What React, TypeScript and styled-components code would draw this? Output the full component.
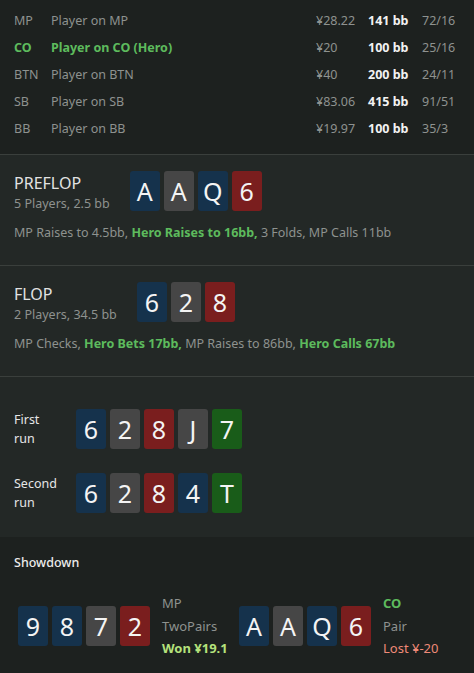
import React from 'react';
import styled, { createGlobalStyle } from 'styled-components';

const GlobalStyle = createGlobalStyle`
  body {
    margin: 0;
    background: #1d211f;
    font-family: 'Noto Sans', 'Open Sans', sans-serif;
    color: #8e928f;
  }
`;

type Suit = 's' | 'c' | 'h' | 'd';

const suitColors: Record<Suit, string> = {
  s: '#15324c',
  c: '#464646',
  h: '#7a1e1e',
  d: '#195c19',
};

const Page = styled.div`
  width: 474px;
  min-height: 673px;
  background: #1d211f;
`;

const PlayerTable = styled.div`
  padding: 7px 14px 12px;
  border-bottom: 1px solid #3a3f3c;
`;

const PlayerRow = styled.div<{ $hero?: boolean }>`
  display: grid;
  grid-template-columns: 37px 1fr 52px 54px 38px;
  height: 27px;
  align-items: center;
  font-size: 12.5px;
  color: ${({ $hero }) => ($hero ? '#5dbb5d' : '#8e928f')};
  font-weight: ${({ $hero }) => ($hero ? 700 : 400)};
`;

const Stack = styled.span`
  color: #8e928f;
  font-weight: 400;
`;

const BigBlinds = styled.span`
  color: #f2f2f2;
  font-weight: 700;
`;

const Ratio = styled.span`
  color: #8e928f;
  font-weight: 400;
`;

const Street = styled.section`
  background: #232826;
  padding: 13px 14px 23px;
  border-bottom: 1px solid #3a3f3c;
`;

const StreetHeader = styled.div`
  display: flex;
  align-items: center;
  gap: 20px;
`;

const StreetInfo = styled.div`
  display: flex;
  flex-direction: column;
  padding-top: 4px;
`;

const StreetTitle = styled.div`
  font-size: 16px;
  line-height: 22px;
  color: #e2e2e2;
`;

const StreetSub = styled.div`
  font-size: 12.5px;
  line-height: 20px;
  color: #8e928f;
`;

const Actions = styled.div`
  margin-top: 10px;
  font-size: 12.5px;
  line-height: 18px;
  color: #8e928f;
`;

const HeroAction = styled.span`
  color: #5dbb5d;
  font-weight: 700;
`;

const Cards = styled.div`
  display: flex;
  gap: 4px;
`;

const CardBox = styled.div<{ $suit: Suit }>`
  width: 30px;
  height: 40px;
  border-radius: 3px;
  background: ${({ $suit }) => suitColors[$suit]};
  color: #f4f4f4;
  font-size: 25px;
  display: flex;
  align-items: center;
  justify-content: center;
`;

const Runs = styled.section`
  background: #232826;
  padding: 32px 14px 24px;
  display: flex;
  flex-direction: column;
  gap: 24px;
`;

const RunRow = styled.div`
  display: flex;
  align-items: center;
`;

const RunLabel = styled.div`
  width: 62px;
  font-size: 12.5px;
  line-height: 19px;
  color: #e6e6e6;
`;

const Showdown = styled.section`
  background: #1d211f;
  padding: 17px 14px 12px;
`;

const ShowdownTitle = styled.div`
  font-size: 12.5px;
  line-height: 18px;
  color: #ececec;
  font-weight: 500;
`;

const Hands = styled.div`
  display: flex;
  margin-top: 20px;
  padding-left: 4px;
`;

const Hand = styled.div`
  width: 230px;
  display: flex;
  align-items: center;
  gap: 12px;
`;

const HandInfo = styled.div`
  display: flex;
  flex-direction: column;
  font-size: 13px;
  line-height: 22.5px;
`;

const HandPos = styled.span<{ $hero?: boolean }>`
  color: ${({ $hero }) => ($hero ? '#5dbb5d' : '#8e928f')};
  font-weight: ${({ $hero }) => ($hero ? 700 : 400)};
`;

const Result = styled.span<{ $won: boolean }>`
  color: ${({ $won }) => ($won ? '#b5e27c' : '#ef8a78')};
  font-weight: ${({ $won }) => ($won ? 700 : 400)};
`;

const Card = ({ c }: { c: string }) => (
  <CardBox $suit={c[1] as Suit}>{c[0]}</CardBox>
);

const CardList = ({ cards }: { cards: string[] }) => (
  <Cards>
    {cards.map((c, i) => (
      <Card key={i} c={c} />
    ))}
  </Cards>
);

const players = [
  { pos: 'MP', name: 'Player on MP', stack: '¥28.22', bb: '141 bb', ratio: '72/16' },
  { pos: 'CO', name: 'Player on CO (Hero)', stack: '¥20', bb: '100 bb', ratio: '25/16', hero: true },
  { pos: 'BTN', name: 'Player on BTN', stack: '¥40', bb: '200 bb', ratio: '24/11' },
  { pos: 'SB', name: 'Player on SB', stack: '¥83.06', bb: '415 bb', ratio: '91/51' },
  { pos: 'BB', name: 'Player on BB', stack: '¥19.97', bb: '100 bb', ratio: '35/3' },
];

export default function App() {
  return (
    <Page>
      <GlobalStyle />
      <PlayerTable>
        {players.map((p) => (
          <PlayerRow key={p.pos} $hero={p.hero}>
            <span>{p.pos}</span>
            <span>{p.name}</span>
            <Stack>{p.stack}</Stack>
            <BigBlinds>{p.bb}</BigBlinds>
            <Ratio>{p.ratio}</Ratio>
          </PlayerRow>
        ))}
      </PlayerTable>

      <Street>
        <StreetHeader>
          <StreetInfo>
            <StreetTitle>PREFLOP</StreetTitle>
            <StreetSub>5 Players, 2.5 bb</StreetSub>
          </StreetInfo>
          <CardList cards={['As', 'Ac', 'Qs', '6h']} />
        </StreetHeader>
        <Actions>
          MP Raises to 4.5bb, <HeroAction>Hero Raises to 16bb,</HeroAction> 3 Folds, MP Calls 11bb
        </Actions>
      </Street>

      <Street>
        <StreetHeader>
          <StreetInfo>
            <StreetTitle>FLOP</StreetTitle>
            <StreetSub>2 Players, 34.5 bb</StreetSub>
          </StreetInfo>
          <CardList cards={['6s', '2c', '8h']} />
        </StreetHeader>
        <Actions>
          MP Checks, <HeroAction>Hero Bets 17bb,</HeroAction> MP Raises to 86bb,{' '}
          <HeroAction>Hero Calls 67bb</HeroAction>
        </Actions>
      </Street>

      <Runs>
        <RunRow>
          <RunLabel>
            First
            <br />
            run
          </RunLabel>
          <CardList cards={['6s', '2c', '8h', 'Jc', '7d']} />
        </RunRow>
        <RunRow>
          <RunLabel>
            Second
            <br />
            run
          </RunLabel>
          <CardList cards={['6s', '2c', '8h', '4s', 'Td']} />
        </RunRow>
      </Runs>

      <Showdown>
        <ShowdownTitle>Showdown</ShowdownTitle>
        <Hands>
          <Hand>
            <CardList cards={['9s', '8s', '7c', '2h']} />
            <HandInfo>
              <HandPos>MP</HandPos>
              <span>TwoPairs</span>
              <Result $won>Won ¥19.1</Result>
            </HandInfo>
          </Hand>
          <Hand>
            <CardList cards={['As', 'Ac', 'Qs', '6h']} />
            <HandInfo>
              <HandPos $hero>CO</HandPos>
              <span>Pair</span>
              <Result $won={false}>Lost ¥-20</Result>
            </HandInfo>
          </Hand>
        </Hands>
      </Showdown>
    </Page>
  );
}
